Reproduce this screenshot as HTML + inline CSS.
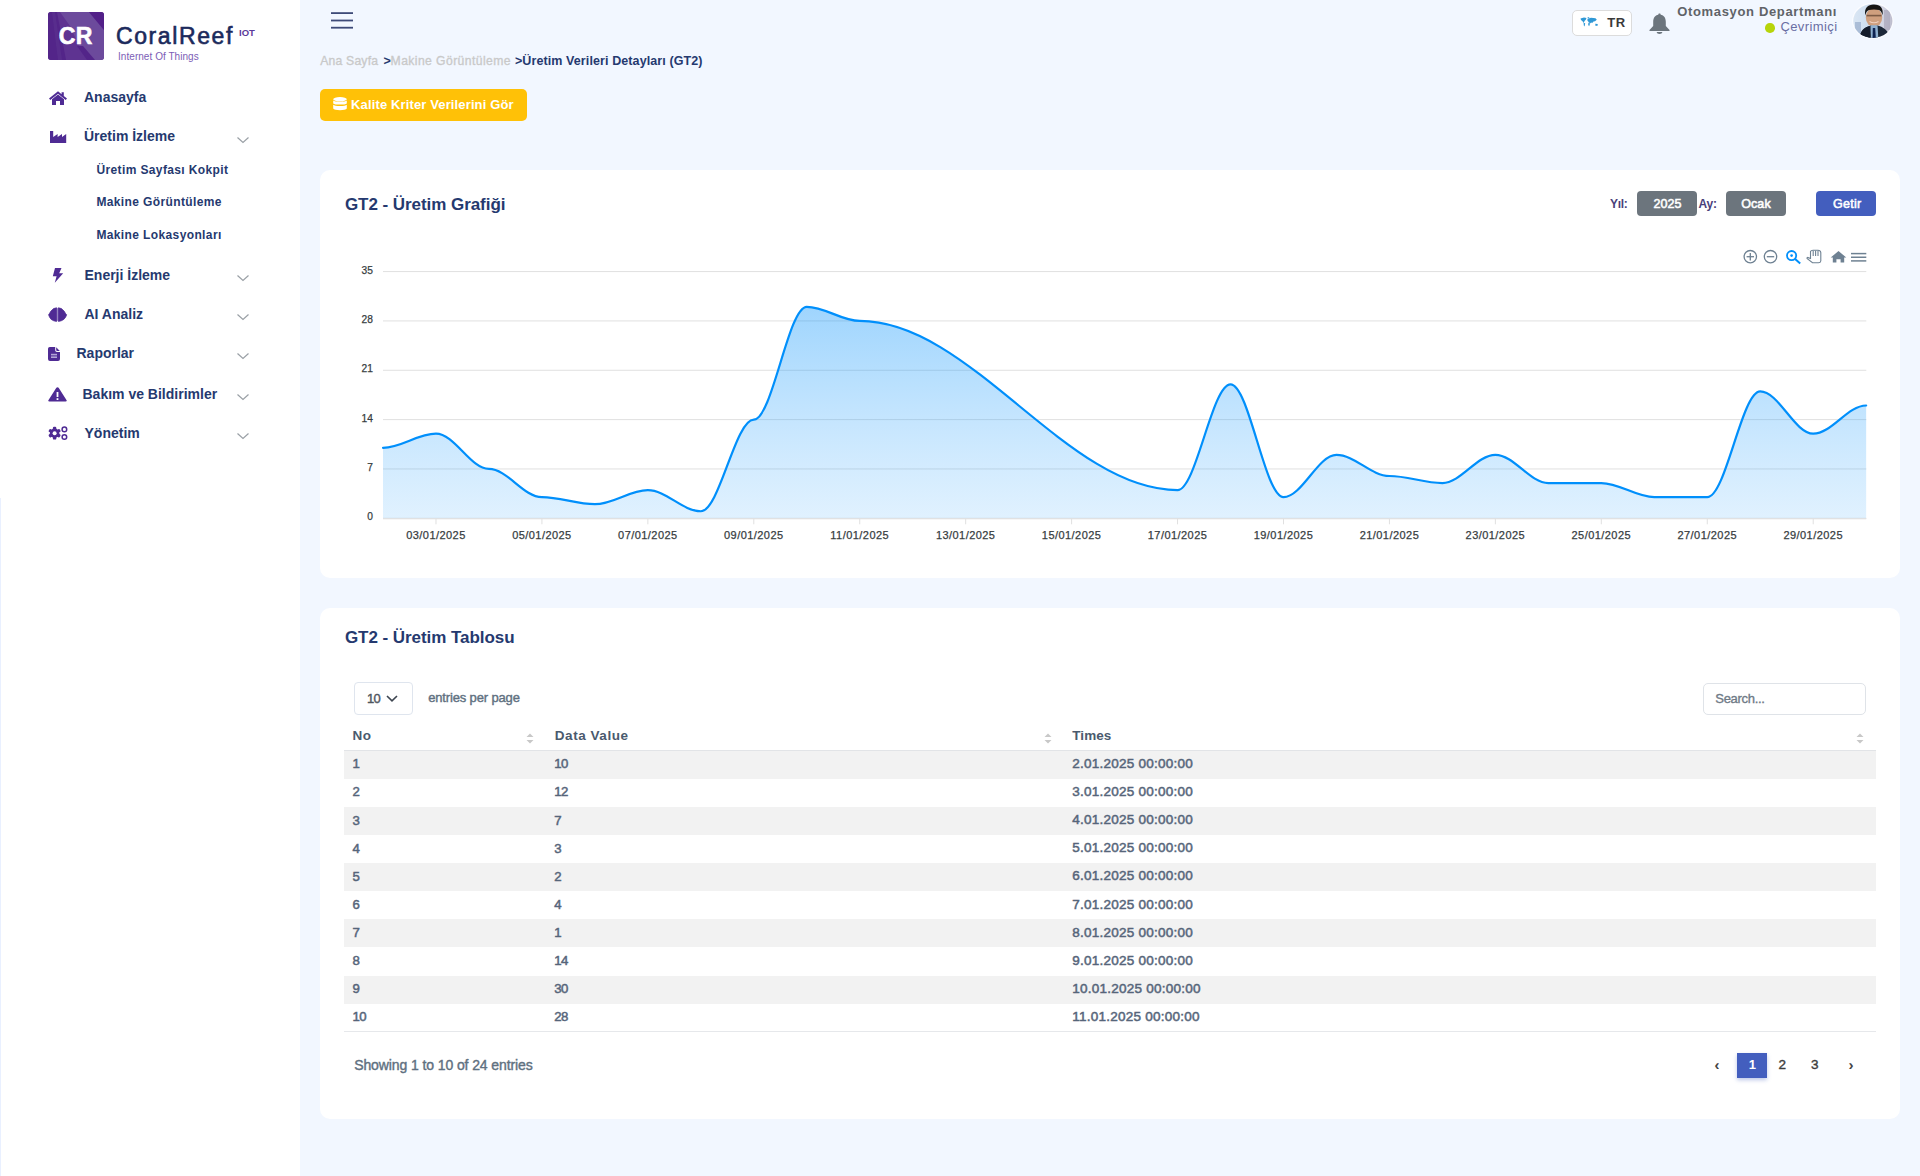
<!DOCTYPE html>
<html><head><meta charset="utf-8"><title>GT2 - Üretim Verileri</title>
<style>
html,body{margin:0;padding:0}
body{width:1920px;height:1176px;position:relative;overflow:hidden;background:#f2f7ff;font-family:"Liberation Sans",sans-serif}
.t{position:absolute;white-space:nowrap;line-height:1}
.r{position:absolute;display:block}
</style></head><body>
<div class="r" style="left:0px;top:0px;width:300px;height:1176px;background:#fff"></div>
<div class="r" style="left:0px;top:498px;width:1px;height:678px;background:#e9f0ff"></div>
<svg class="r" style="left:48px;top:12px" width="56" height="48" viewBox="0 0 56 48">
<defs><clipPath id="lc"><rect width="56" height="48" rx="3"/></clipPath></defs>
<g clip-path="url(#lc)">
<rect width="56" height="48" fill="#5e3391"/>
<polygon points="0,0 9,0 18,48 0,48" fill="#532589"/>
<polygon points="4,0 7,0 14,48 10,48" fill="#5a2f8f" opacity="0.8"/>
<polygon points="12,0 41,0 56,18 56,48 44,48 31,34 22,14" fill="#6c4a9c"/>
<polygon points="41,0 56,0 56,18" fill="#521f88"/>
<polygon points="29,34 35,34 47,48 39,48" fill="#532589"/>
</g></svg>
<div class="t " style="left:58.80px;top:25.23px;font-size:23px;font-weight:700;color:#ffffff;letter-spacing:0.3px;-webkit-text-stroke:0.6px #fff;">CR</div>
<div class="t " style="left:116.00px;top:25.03px;font-size:23px;font-weight:400;color:#1b2a5c;letter-spacing:1.6px;-webkit-text-stroke:0.6px currentColor;">CoralReef</div>
<div class="t " style="left:239.00px;top:27.66px;font-size:9.5px;font-weight:700;color:#5b3a9a;">IOT</div>
<div class="t " style="left:118.00px;top:51.53px;font-size:10px;font-weight:400;color:#7c5db6;letter-spacing:0.05px;">Internet Of Things</div>
<div class="t " style="left:84.00px;top:90.45px;font-size:14px;font-weight:700;color:#25396f;">Anasayfa</div>
<div class="t " style="left:84.00px;top:129.45px;font-size:14px;font-weight:700;color:#25396f;">Üretim İzleme</div>
<svg class="r" style="left:236px;top:135.6px" width="14" height="8" viewBox="0 0 14 8"><polyline points="1.5,1.5 7,6.5 12.5,1.5" fill="none" stroke="#9aa0a6" stroke-width="1.2"/></svg>
<div class="t " style="left:84.50px;top:267.85px;font-size:14px;font-weight:700;color:#25396f;">Enerji İzleme</div>
<svg class="r" style="left:236px;top:274.0px" width="14" height="8" viewBox="0 0 14 8"><polyline points="1.5,1.5 7,6.5 12.5,1.5" fill="none" stroke="#9aa0a6" stroke-width="1.2"/></svg>
<div class="t " style="left:84.50px;top:307.15px;font-size:14px;font-weight:700;color:#25396f;">AI Analiz</div>
<svg class="r" style="left:236px;top:313.3px" width="14" height="8" viewBox="0 0 14 8"><polyline points="1.5,1.5 7,6.5 12.5,1.5" fill="none" stroke="#9aa0a6" stroke-width="1.2"/></svg>
<div class="t " style="left:76.50px;top:346.25px;font-size:14px;font-weight:700;color:#25396f;">Raporlar</div>
<svg class="r" style="left:236px;top:352.4px" width="14" height="8" viewBox="0 0 14 8"><polyline points="1.5,1.5 7,6.5 12.5,1.5" fill="none" stroke="#9aa0a6" stroke-width="1.2"/></svg>
<div class="t " style="left:82.50px;top:386.55px;font-size:14px;font-weight:700;color:#25396f;">Bakım ve Bildirimler</div>
<svg class="r" style="left:236px;top:392.7px" width="14" height="8" viewBox="0 0 14 8"><polyline points="1.5,1.5 7,6.5 12.5,1.5" fill="none" stroke="#9aa0a6" stroke-width="1.2"/></svg>
<div class="t " style="left:84.50px;top:425.55px;font-size:14px;font-weight:700;color:#25396f;">Yönetim</div>
<svg class="r" style="left:236px;top:431.7px" width="14" height="8" viewBox="0 0 14 8"><polyline points="1.5,1.5 7,6.5 12.5,1.5" fill="none" stroke="#9aa0a6" stroke-width="1.2"/></svg>
<svg class="r" style="left:48px;top:90px" width="20" height="16" viewBox="0 0 20 16">
<path d="M10 1.2 L1 8.6 L2.3 10 L10 3.8 L17.7 10 L19 8.6 L15.8 6 V2.2 H13.6 V4.2 Z" fill="#4f2b94"/>
<path d="M4 9.2 L10 4.6 L16 9.2 V15 H12 V11 H8 V15 H4 Z" fill="#4f2b94"/>
</svg>
<svg class="r" style="left:50px;top:131px" width="17" height="12" viewBox="0 0 17 12">
<path d="M0 0 H3.2 V6 L7.6 3 V6 L12 3 V6 L16.2 3 V12 H0 Z" fill="#4f2b94"/>
</svg>
<svg class="r" style="left:52px;top:268px" width="12" height="15" viewBox="0 0 12 15">
<path d="M3 0 H9.5 L7.2 5.2 H11.2 L2.8 14.8 L4.6 8.2 H0.8 Z" fill="#4f2b94"/>
</svg>
<svg class="r" style="left:48px;top:307px" width="20" height="15" viewBox="0 0 20 15">
<rect x="8.4" y="1.2" width="2.2" height="12.6" fill="#a597cc"/>
<path d="M8.6 0.8 L5.6 1.6 L3 4 L1.4 6.6 L0.6 7.8 L1.6 10.2 L3.2 12.4 L5.8 13.8 L8.6 14.4 Z" fill="#4f2b94" stroke="#4f2b94" stroke-width="0.8" stroke-linejoin="round"/>
<path d="M10.4 0.8 L13.4 1.6 L16 4 L17.6 6.6 L18.6 7.8 L17.6 10.2 L15.8 12.4 L13.2 13.8 L10.4 14.4 Z" fill="#4f2b94" stroke="#4f2b94" stroke-width="0.8" stroke-linejoin="round"/>
</svg>
<svg class="r" style="left:48px;top:347px" width="13" height="14" viewBox="0 0 13 14">
<path d="M1.8 0 H7.2 V3.2 Q7.2 5 9 5 H12 V12 Q12 14 10 14 H2 Q0 14 0 12 V1.8 Q0 0 1.8 0 Z" fill="#4f2b94"/>
<path d="M8.2 0.2 L11.8 3.9 H9.2 Q8.2 3.9 8.2 2.9 Z" fill="#4f2b94"/>
<rect x="3" y="6.8" width="6" height="1.6" fill="#b3a5d6"/>
<rect x="3" y="9.4" width="6" height="1.6" fill="#b3a5d6"/>
</svg>
<svg class="r" style="left:47.5px;top:386.5px" width="19" height="15" viewBox="0 0 19 15">
<path d="M9.5 0.3 Q10.3 0.3 10.8 1.1 L18.6 13.2 Q19.2 14.6 17.6 14.6 H1.4 Q-0.2 14.6 0.4 13.2 L8.2 1.1 Q8.7 0.3 9.5 0.3 Z" fill="#4f2b94"/>
<rect x="8.6" y="5" width="1.8" height="5" fill="#fff"/>
<rect x="8.6" y="11.2" width="1.8" height="1.8" fill="#fff"/>
</svg>
<svg class="r" style="left:47px;top:425px" width="22" height="16" viewBox="0 0 22 16">
<g fill="#4f2b94">
<circle cx="7.6" cy="8.2" r="4.7"/>
<rect x="5.9" y="1.8" width="3.4" height="12.8" rx="1.2"/>
<rect x="5.9" y="1.8" width="3.4" height="12.8" rx="1.2" transform="rotate(60 7.6 8.2)"/>
<rect x="5.9" y="1.8" width="3.4" height="12.8" rx="1.2" transform="rotate(120 7.6 8.2)"/>
</g>
<circle cx="7.6" cy="8.2" r="2" fill="#fff"/>
<circle cx="17.4" cy="4.4" r="2.3" fill="none" stroke="#4f2b94" stroke-width="1.5"/>
<circle cx="17.4" cy="12" r="2.3" fill="none" stroke="#4f2b94" stroke-width="1.5"/>
</svg>
<div class="t " style="left:96.40px;top:163.64px;font-size:12px;font-weight:700;color:#25396f;letter-spacing:0.38px;">Üretim Sayfası Kokpit</div>
<div class="t " style="left:96.40px;top:196.04px;font-size:12px;font-weight:700;color:#25396f;letter-spacing:0.38px;">Makine Görüntüleme</div>
<div class="t " style="left:96.40px;top:228.54px;font-size:12px;font-weight:700;color:#25396f;letter-spacing:0.38px;">Makine Lokasyonları</div>
<svg class="r" style="left:331px;top:12px" width="22" height="17" viewBox="0 0 22 17">
<rect x="0" y="0.2" width="22" height="1.8" fill="#3d4a78"/>
<rect x="0" y="7.6" width="22" height="1.8" fill="#3d4a78"/>
<rect x="0" y="14.8" width="22" height="1.8" fill="#3d4a78"/>
</svg>
<div class="r" style="left:1572px;top:10px;width:60px;height:25.5px;background:#fff;border:1px solid #dcdcdc;border-radius:5px;box-sizing:border-box"></div>
<svg class="r" style="left:1580px;top:17px" width="19" height="10" viewBox="0 0 19 10">
<g fill="#2f98d6">
<path d="M0.5 1.5 L4 0.5 L6.5 1 L5.8 2.8 L4.5 4 L3.8 6 L2.5 4.2 L1 3 Z"/>
<path d="M7.2 0.6 L9.5 0 L8.6 1.6 Z"/>
<path d="M3.6 5.8 L5.2 6.2 L4.6 9.5 L3.8 8.5 Z"/>
<path d="M7.5 1.8 L11 0.8 L15.5 1.2 L16.8 2.8 L15 4.2 L13.5 4.4 L12.2 6 L11.2 5.4 L10 6.4 L8.4 4.8 L7.4 3.4 Z"/>
<path d="M8.4 5.6 L10 6.6 L9.2 9.2 L8.2 8 Z"/>
<path d="M15.2 6.8 L17.6 7 L17.8 8.6 L15.6 9 Z"/>
</g></svg>
<div class="t " style="left:1607.20px;top:16.19px;font-size:13px;font-weight:700;color:#3a3a3a;letter-spacing:0.5px;">TR</div>
<svg class="r" style="left:1649px;top:12.5px" width="21" height="21" viewBox="0 0 21 21">
<path d="M10.5 0.5 C11.3 0.5 11.7 1 11.7 1.7 C15 2.3 16.8 5 16.8 8.8 V13 L20.5 17 V18 H0.5 V17 L4.2 13 V8.8 C4.2 5 6 2.3 9.3 1.7 C9.3 1 9.7 0.5 10.5 0.5 Z" fill="#6c757d"/>
<path d="M7.6 19 H13.4 C13.2 20.3 12 21 10.5 21 C9 21 7.8 20.3 7.6 19 Z" fill="#6c757d"/>
</svg>
<div class="t " style="right:83.00px;top:4.59px;font-size:13px;font-weight:700;color:#5f6368;letter-spacing:0.66px;">Otomasyon Departmanı</div>
<div class="t " style="right:82.50px;top:19.59px;font-size:13px;font-weight:400;color:#6a6ea3;letter-spacing:0.4px;">Çevrimiçi</div>
<div class="r" style="left:1765.2px;top:23px;width:9.6px;height:9.6px;border-radius:50%;background:#b7d40a"></div>
<svg class="r" style="left:1851px;top:1.5px" width="44" height="39" viewBox="0 0 44 39">
<defs><clipPath id="av"><ellipse cx="21.8" cy="18.9" rx="19.6" ry="17"/></clipPath>
<linearGradient id="avbg" x1="0" y1="0" x2="1" y2="0"><stop offset="0" stop-color="#dce7f4"/><stop offset="0.35" stop-color="#cfdff0"/><stop offset="0.7" stop-color="#d3d6e4"/><stop offset="1" stop-color="#b7b5c6"/></linearGradient></defs>
<ellipse cx="21.8" cy="18.9" rx="20.8" ry="18.2" fill="#fbfcff"/>
<g clip-path="url(#av)">
<rect width="44" height="39" fill="url(#avbg)"/>
<rect x="4" y="20" width="6" height="14" fill="#8ea3c4" opacity="0.6"/>
<rect x="33" y="8" width="6" height="20" fill="#a9a6ba" opacity="0.7"/>
<ellipse cx="23" cy="15.5" rx="8.2" ry="9.6" fill="#cf9f7e"/>
<path d="M14.2 13.5 C13.2 6 16.5 2.5 23 2.5 C29.5 2.5 32.5 6 31.6 13.2 C30.6 10.5 30 8.5 28 8 C25 7.3 21 7.3 18 8 C16 8.6 15 10.5 14.2 13.5 Z" fill="#161514"/>
<rect x="15.5" y="12.8" width="15" height="1.6" fill="#5a3e2e" opacity="0.7"/>
<path d="M18.5 19.5 Q23 22 27.5 19.5" stroke="#f0d0c0" stroke-width="1.2" fill="none"/>
<path d="M8 39 C9 29 13 25.5 20 23.5 L23 25 L26 23.5 C33 25 38 28.5 40 39 Z" fill="#1c2839"/>
<path d="M19.5 23.2 L26.5 23.2 L27.5 39 H20 Z" fill="#8fb0d0"/>
<path d="M21.8 26 L24.2 26 L25 39 H21.5 Z" fill="#0f2352"/>
<path d="M8 39 C9 29 12 26 18.5 24 L19.5 39 Z" fill="#141c2b"/>
</g>
</svg>
<div class="t " style="left:320.20px;top:55.07px;font-size:12.2px;font-weight:400;color:#c9c9c9;letter-spacing:0.2px;-webkit-text-stroke:0.3px currentColor;">Ana Sayfa</div>
<div class="t " style="left:383.50px;top:54.82px;font-size:12.5px;font-weight:700;color:#25396f;">&gt;</div>
<div class="t " style="left:390.60px;top:55.07px;font-size:12.2px;font-weight:400;color:#c9c9c9;letter-spacing:0.4px;-webkit-text-stroke:0.3px currentColor;">Makine Görüntüleme</div>
<div class="t " style="left:515.00px;top:54.82px;font-size:12.5px;font-weight:700;color:#25396f;">&gt;</div>
<div class="t " style="left:522.30px;top:54.62px;font-size:12.5px;font-weight:700;color:#25396f;letter-spacing:0.1px;">Üretim Verileri Detayları (GT2)</div>
<div class="r" style="left:320px;top:89px;width:207px;height:32px;background:#ffc107;border-radius:5px"></div>
<svg class="r" style="left:333px;top:97px" width="14" height="14" viewBox="0 0 14 14">
<g fill="#fff">
<ellipse cx="7" cy="2.2" rx="6.8" ry="2.2"/>
<path d="M0.2 3.6 C1.5 5.2 12.5 5.2 13.8 3.6 V6.4 C12.5 8 1.5 8 0.2 6.4 Z"/>
<path d="M0.2 7.8 C1.5 9.4 12.5 9.4 13.8 7.8 V11.6 C13 13.8 1 13.8 0.2 11.6 Z"/>
</g></svg>
<div class="t " style="left:351.10px;top:98.09px;font-size:13px;font-weight:700;color:#ffffff;letter-spacing:0.13px;">Kalite Kriter Verilerini Gör</div>
<div class="r" style="left:320px;top:170px;width:1580px;height:408px;background:#fff;border-radius:10px"></div>
<div class="t " style="left:344.90px;top:195.51px;font-size:17px;font-weight:700;color:#25396f;letter-spacing:-0.05px;">GT2 - Üretim Grafiği</div>
<div class="t " style="left:1610.00px;top:197.84px;font-size:12px;font-weight:700;color:#4a3f7a;letter-spacing:-0.3px;">Yıl:</div>
<div class="r" style="left:1637px;top:191px;width:60px;height:25px;background:#6c757d;border-radius:4px"></div>
<div class="t " style="left:1653.60px;top:197.62px;font-size:12.5px;font-weight:400;color:#ffffff;letter-spacing:0.05px;-webkit-text-stroke:0.55px #fff;">2025</div>
<div class="t " style="left:1698.50px;top:197.84px;font-size:12px;font-weight:700;color:#4a3f7a;letter-spacing:-0.2px;">Ay:</div>
<div class="r" style="left:1726px;top:191px;width:60px;height:25px;background:#6c757d;border-radius:4px"></div>
<div class="t " style="left:1741.20px;top:197.62px;font-size:12.5px;font-weight:400;color:#ffffff;letter-spacing:0.1px;-webkit-text-stroke:0.55px #fff;">Ocak</div>
<div class="r" style="left:1816px;top:191px;width:60px;height:25px;background:#435ebe;border-radius:4px"></div>
<div class="t " style="left:1833.00px;top:197.62px;font-size:12.5px;font-weight:400;color:#ffffff;letter-spacing:0.3px;-webkit-text-stroke:0.55px #fff;">Getir</div>
<svg class="r" style="left:0;top:0" width="1920" height="600" viewBox="0 0 1920 600">
<defs><linearGradient id="ag" gradientUnits="userSpaceOnUse" x1="0" y1="305" x2="0" y2="518"><stop offset="0" stop-color="#008ffb" stop-opacity="0.38"/><stop offset="1" stop-color="#3ea9fc" stop-opacity="0.16"/></linearGradient></defs>
<line x1="383" y1="518.30" x2="1866.3" y2="518.30" stroke="#e0e0e0" stroke-width="1"/>
<line x1="383" y1="468.96" x2="1866.3" y2="468.96" stroke="#e0e0e0" stroke-width="1"/>
<line x1="383" y1="419.61" x2="1866.3" y2="419.61" stroke="#e0e0e0" stroke-width="1"/>
<line x1="383" y1="370.27" x2="1866.3" y2="370.27" stroke="#e0e0e0" stroke-width="1"/>
<line x1="383" y1="320.93" x2="1866.3" y2="320.93" stroke="#e0e0e0" stroke-width="1"/>
<line x1="383" y1="271.58" x2="1866.3" y2="271.58" stroke="#e0e0e0" stroke-width="1"/>
<path d="M383.00,447.81 C401.54,447.81 417.43,433.71 435.97,433.71 C454.51,433.71 470.40,468.96 488.94,468.96 C507.48,468.96 523.37,497.15 541.91,497.15 C560.45,497.15 576.34,504.20 594.88,504.20 C613.42,504.20 629.31,490.10 647.85,490.10 C666.39,490.10 682.28,511.25 700.82,511.25 C719.36,511.25 735.25,419.61 753.79,419.61 C772.33,419.61 788.22,306.83 806.76,306.83 C825.30,306.83 841.19,320.93 859.73,320.93 C970.97,320.93 1066.31,490.10 1177.55,490.10 C1196.09,490.10 1211.98,384.37 1230.52,384.37 C1249.06,384.37 1264.95,497.15 1283.49,497.15 C1302.03,497.15 1317.92,454.86 1336.46,454.86 C1355.00,454.86 1370.89,476.01 1389.43,476.01 C1407.97,476.01 1423.86,483.05 1442.40,483.05 C1460.94,483.05 1476.83,454.86 1495.37,454.86 C1513.91,454.86 1529.80,483.05 1548.34,483.05 C1566.88,483.05 1582.77,483.05 1601.31,483.05 C1619.85,483.05 1635.74,497.15 1654.28,497.15 C1672.82,497.15 1688.71,497.15 1707.25,497.15 C1725.79,497.15 1741.68,391.42 1760.22,391.42 C1778.76,391.42 1794.65,433.71 1813.19,433.71 C1831.73,433.71 1847.62,405.52 1866.16,405.52 L1866.16,518.30 L383.00,518.30 Z" fill="url(#ag)"/>
<path d="M383.00,447.81 C401.54,447.81 417.43,433.71 435.97,433.71 C454.51,433.71 470.40,468.96 488.94,468.96 C507.48,468.96 523.37,497.15 541.91,497.15 C560.45,497.15 576.34,504.20 594.88,504.20 C613.42,504.20 629.31,490.10 647.85,490.10 C666.39,490.10 682.28,511.25 700.82,511.25 C719.36,511.25 735.25,419.61 753.79,419.61 C772.33,419.61 788.22,306.83 806.76,306.83 C825.30,306.83 841.19,320.93 859.73,320.93 C970.97,320.93 1066.31,490.10 1177.55,490.10 C1196.09,490.10 1211.98,384.37 1230.52,384.37 C1249.06,384.37 1264.95,497.15 1283.49,497.15 C1302.03,497.15 1317.92,454.86 1336.46,454.86 C1355.00,454.86 1370.89,476.01 1389.43,476.01 C1407.97,476.01 1423.86,483.05 1442.40,483.05 C1460.94,483.05 1476.83,454.86 1495.37,454.86 C1513.91,454.86 1529.80,483.05 1548.34,483.05 C1566.88,483.05 1582.77,483.05 1601.31,483.05 C1619.85,483.05 1635.74,497.15 1654.28,497.15 C1672.82,497.15 1688.71,497.15 1707.25,497.15 C1725.79,497.15 1741.68,391.42 1760.22,391.42 C1778.76,391.42 1794.65,433.71 1813.19,433.71 C1831.73,433.71 1847.62,405.52 1866.16,405.52" fill="none" stroke="#008ffb" stroke-width="2.2" stroke-linecap="round"/>
<line x1="383" y1="518.80" x2="1866.3" y2="518.80" stroke="#e0e0e0" stroke-width="1"/>
<line x1="435.97" y1="518.30" x2="435.97" y2="524.30" stroke="#e0e0e0" stroke-width="1"/>
<line x1="541.91" y1="518.30" x2="541.91" y2="524.30" stroke="#e0e0e0" stroke-width="1"/>
<line x1="647.85" y1="518.30" x2="647.85" y2="524.30" stroke="#e0e0e0" stroke-width="1"/>
<line x1="753.79" y1="518.30" x2="753.79" y2="524.30" stroke="#e0e0e0" stroke-width="1"/>
<line x1="859.73" y1="518.30" x2="859.73" y2="524.30" stroke="#e0e0e0" stroke-width="1"/>
<line x1="965.67" y1="518.30" x2="965.67" y2="524.30" stroke="#e0e0e0" stroke-width="1"/>
<line x1="1071.61" y1="518.30" x2="1071.61" y2="524.30" stroke="#e0e0e0" stroke-width="1"/>
<line x1="1177.55" y1="518.30" x2="1177.55" y2="524.30" stroke="#e0e0e0" stroke-width="1"/>
<line x1="1283.49" y1="518.30" x2="1283.49" y2="524.30" stroke="#e0e0e0" stroke-width="1"/>
<line x1="1389.43" y1="518.30" x2="1389.43" y2="524.30" stroke="#e0e0e0" stroke-width="1"/>
<line x1="1495.37" y1="518.30" x2="1495.37" y2="524.30" stroke="#e0e0e0" stroke-width="1"/>
<line x1="1601.31" y1="518.30" x2="1601.31" y2="524.30" stroke="#e0e0e0" stroke-width="1"/>
<line x1="1707.25" y1="518.30" x2="1707.25" y2="524.30" stroke="#e0e0e0" stroke-width="1"/>
<line x1="1813.19" y1="518.30" x2="1813.19" y2="524.30" stroke="#e0e0e0" stroke-width="1"/>
</svg>
<div class="t " style="right:1547.00px;top:512.46px;font-size:10.2px;font-weight:400;color:#373d3f;letter-spacing:0.1px;-webkit-text-stroke:0.25px currentColor;">0</div>
<div class="t " style="right:1547.00px;top:463.12px;font-size:10.2px;font-weight:400;color:#373d3f;letter-spacing:0.1px;-webkit-text-stroke:0.25px currentColor;">7</div>
<div class="t " style="right:1547.00px;top:413.78px;font-size:10.2px;font-weight:400;color:#373d3f;letter-spacing:0.1px;-webkit-text-stroke:0.25px currentColor;">14</div>
<div class="t " style="right:1547.00px;top:364.43px;font-size:10.2px;font-weight:400;color:#373d3f;letter-spacing:0.1px;-webkit-text-stroke:0.25px currentColor;">21</div>
<div class="t " style="right:1547.00px;top:315.09px;font-size:10.2px;font-weight:400;color:#373d3f;letter-spacing:0.1px;-webkit-text-stroke:0.25px currentColor;">28</div>
<div class="t " style="right:1547.00px;top:265.75px;font-size:10.2px;font-weight:400;color:#373d3f;letter-spacing:0.1px;-webkit-text-stroke:0.25px currentColor;">35</div>
<div class="t" style="left:395.97px;width:80px;text-align:center;top:530.29px;font-size:11px;color:#373d3f;letter-spacing:0.45px;-webkit-text-stroke:0.25px #373d3f">03/01/2025</div>
<div class="t" style="left:501.91px;width:80px;text-align:center;top:530.29px;font-size:11px;color:#373d3f;letter-spacing:0.45px;-webkit-text-stroke:0.25px #373d3f">05/01/2025</div>
<div class="t" style="left:607.85px;width:80px;text-align:center;top:530.29px;font-size:11px;color:#373d3f;letter-spacing:0.45px;-webkit-text-stroke:0.25px #373d3f">07/01/2025</div>
<div class="t" style="left:713.79px;width:80px;text-align:center;top:530.29px;font-size:11px;color:#373d3f;letter-spacing:0.45px;-webkit-text-stroke:0.25px #373d3f">09/01/2025</div>
<div class="t" style="left:819.73px;width:80px;text-align:center;top:530.29px;font-size:11px;color:#373d3f;letter-spacing:0.45px;-webkit-text-stroke:0.25px #373d3f">11/01/2025</div>
<div class="t" style="left:925.67px;width:80px;text-align:center;top:530.29px;font-size:11px;color:#373d3f;letter-spacing:0.45px;-webkit-text-stroke:0.25px #373d3f">13/01/2025</div>
<div class="t" style="left:1031.61px;width:80px;text-align:center;top:530.29px;font-size:11px;color:#373d3f;letter-spacing:0.45px;-webkit-text-stroke:0.25px #373d3f">15/01/2025</div>
<div class="t" style="left:1137.55px;width:80px;text-align:center;top:530.29px;font-size:11px;color:#373d3f;letter-spacing:0.45px;-webkit-text-stroke:0.25px #373d3f">17/01/2025</div>
<div class="t" style="left:1243.49px;width:80px;text-align:center;top:530.29px;font-size:11px;color:#373d3f;letter-spacing:0.45px;-webkit-text-stroke:0.25px #373d3f">19/01/2025</div>
<div class="t" style="left:1349.43px;width:80px;text-align:center;top:530.29px;font-size:11px;color:#373d3f;letter-spacing:0.45px;-webkit-text-stroke:0.25px #373d3f">21/01/2025</div>
<div class="t" style="left:1455.37px;width:80px;text-align:center;top:530.29px;font-size:11px;color:#373d3f;letter-spacing:0.45px;-webkit-text-stroke:0.25px #373d3f">23/01/2025</div>
<div class="t" style="left:1561.31px;width:80px;text-align:center;top:530.29px;font-size:11px;color:#373d3f;letter-spacing:0.45px;-webkit-text-stroke:0.25px #373d3f">25/01/2025</div>
<div class="t" style="left:1667.25px;width:80px;text-align:center;top:530.29px;font-size:11px;color:#373d3f;letter-spacing:0.45px;-webkit-text-stroke:0.25px #373d3f">27/01/2025</div>
<div class="t" style="left:1773.19px;width:80px;text-align:center;top:530.29px;font-size:11px;color:#373d3f;letter-spacing:0.45px;-webkit-text-stroke:0.25px #373d3f">29/01/2025</div>
<svg class="r" style="left:1740px;top:248px" width="130" height="18" viewBox="1740 248 130 18">
<g fill="none" stroke="#6e8192" stroke-width="1.3">
<circle cx="1750.3" cy="256.7" r="6.2"/>
<line x1="1750.3" y1="253" x2="1750.3" y2="260.4"/><line x1="1746.6" y1="256.7" x2="1754" y2="256.7"/>
<circle cx="1770.5" cy="256.7" r="6.2"/>
<line x1="1766.8" y1="256.7" x2="1774.2" y2="256.7"/>
</g>
<g fill="none" stroke="#008ffb" stroke-width="1.8">
<circle cx="1791.6" cy="255.6" r="4.6"/>
<line x1="1794.8" y1="258.8" x2="1800.2" y2="263.6" stroke-width="2"/>
</g>
<circle cx="1791.6" cy="255.6" r="1.3" fill="#008ffb"/>
<g fill="none" stroke="#6e8192" stroke-width="1.1">
<path d="M1810.5 251.5 Q1811 250.2 1813 250.2 H1818 Q1820.5 250.2 1820.8 252.5 V261 Q1820.5 262.8 1818.5 262.8 H1812.5 L1807.2 258.6 Q1806.6 257.8 1807.6 257.4 L1810.5 258.4 Z"/>
<line x1="1813.2" y1="250.8" x2="1813.2" y2="256"/><line x1="1815.6" y1="250.8" x2="1815.6" y2="256"/><line x1="1818" y1="250.8" x2="1818" y2="256"/>
</g>
<path d="M1838.5 251 L1846.3 257.6 H1844.2 V262.5 H1840.6 V259.2 H1836.4 V262.5 H1832.8 V257.6 H1830.7 Z" fill="#6e8192"/>
<g stroke="#6e8192" stroke-width="1.5">
<line x1="1851" y1="253.6" x2="1866.3" y2="253.6"/><line x1="1851" y1="257.25" x2="1866.3" y2="257.25"/><line x1="1851" y1="260.9" x2="1866.3" y2="260.9"/>
</g>
</svg>
<div class="r" style="left:320px;top:608px;width:1580px;height:511px;background:#fff;border-radius:10px"></div>
<div class="t " style="left:344.90px;top:628.51px;font-size:17px;font-weight:700;color:#25396f;letter-spacing:-0.05px;">GT2 - Üretim Tablosu</div>
<div class="r" style="left:354px;top:682px;width:58.5px;height:32.5px;border:1px solid #dfe5ee;border-radius:4px;box-sizing:border-box"></div>
<div class="t " style="left:366.90px;top:691.99px;font-size:13px;font-weight:400;color:#4f5660;letter-spacing:-0.6px;-webkit-text-stroke:0.4px currentColor;">10</div>
<svg class="r" style="left:386px;top:695px" width="12" height="7" viewBox="0 0 12 7"><polyline points="1,1 6,5.8 11,1" fill="none" stroke="#3d4550" stroke-width="1.6"/></svg>
<div class="t " style="left:428.20px;top:690.99px;font-size:13px;font-weight:400;color:#607080;letter-spacing:-0.15px;-webkit-text-stroke:0.4px currentColor;">entries per page</div>
<div class="r" style="left:1702.5px;top:682.5px;width:163.5px;height:32.5px;border:1px solid #dfe3e8;border-radius:5px;box-sizing:border-box"></div>
<div class="t " style="left:1715.30px;top:691.79px;font-size:13px;font-weight:400;color:#6f7a86;letter-spacing:-0.3px;-webkit-text-stroke:0.35px currentColor;">Search...</div>
<div class="t " style="left:352.60px;top:728.67px;font-size:13.5px;font-weight:700;color:#4a5a6e;letter-spacing:0.4px;">No</div>
<div class="t " style="left:554.80px;top:728.57px;font-size:13.5px;font-weight:700;color:#4a5a6e;letter-spacing:0.55px;">Data Value</div>
<div class="t " style="left:1072.20px;top:728.77px;font-size:13.5px;font-weight:700;color:#4a5a6e;letter-spacing:0.1px;">Times</div>
<svg class="r" style="left:526px;top:732.5px" width="8" height="11" viewBox="0 0 8 11"><path d="M4 0.5 L7.5 4 H0.5 Z" fill="#c8c8c8"/><path d="M4 10.5 L7.5 7 H0.5 Z" fill="#c8c8c8"/></svg>
<svg class="r" style="left:1044px;top:732.5px" width="8" height="11" viewBox="0 0 8 11"><path d="M4 0.5 L7.5 4 H0.5 Z" fill="#c8c8c8"/><path d="M4 10.5 L7.5 7 H0.5 Z" fill="#c8c8c8"/></svg>
<svg class="r" style="left:1856px;top:732.5px" width="8" height="11" viewBox="0 0 8 11"><path d="M4 0.5 L7.5 4 H0.5 Z" fill="#c8c8c8"/><path d="M4 10.5 L7.5 7 H0.5 Z" fill="#c8c8c8"/></svg>
<div class="r" style="left:344px;top:749.5px;width:1532px;height:1.5px;background:#e2e4e7"></div>
<div class="r" style="left:344px;top:750.80px;width:1532px;height:28.10px;background:#f2f2f2"></div>
<div class="t " style="left:352.40px;top:757.32px;font-size:13.2px;font-weight:400;color:#56657a;letter-spacing:-0.4px;-webkit-text-stroke:0.5px currentColor;">1</div>
<div class="t " style="left:554.20px;top:757.32px;font-size:13.2px;font-weight:400;color:#56657a;letter-spacing:-0.4px;-webkit-text-stroke:0.5px currentColor;">10</div>
<div class="t " style="left:1072.20px;top:757.07px;font-size:13.5px;font-weight:400;color:#56657a;letter-spacing:0.25px;-webkit-text-stroke:0.5px currentColor;">2.01.2025 00:00:00</div>
<div class="t " style="left:352.40px;top:785.42px;font-size:13.2px;font-weight:400;color:#56657a;letter-spacing:-0.4px;-webkit-text-stroke:0.5px currentColor;">2</div>
<div class="t " style="left:554.20px;top:785.42px;font-size:13.2px;font-weight:400;color:#56657a;letter-spacing:-0.4px;-webkit-text-stroke:0.5px currentColor;">12</div>
<div class="t " style="left:1072.20px;top:785.17px;font-size:13.5px;font-weight:400;color:#56657a;letter-spacing:0.25px;-webkit-text-stroke:0.5px currentColor;">3.01.2025 00:00:00</div>
<div class="r" style="left:344px;top:807.00px;width:1532px;height:28.10px;background:#f2f2f2"></div>
<div class="t " style="left:352.40px;top:813.52px;font-size:13.2px;font-weight:400;color:#56657a;letter-spacing:-0.4px;-webkit-text-stroke:0.5px currentColor;">3</div>
<div class="t " style="left:554.20px;top:813.52px;font-size:13.2px;font-weight:400;color:#56657a;letter-spacing:-0.4px;-webkit-text-stroke:0.5px currentColor;">7</div>
<div class="t " style="left:1072.20px;top:813.27px;font-size:13.5px;font-weight:400;color:#56657a;letter-spacing:0.25px;-webkit-text-stroke:0.5px currentColor;">4.01.2025 00:00:00</div>
<div class="t " style="left:352.40px;top:841.62px;font-size:13.2px;font-weight:400;color:#56657a;letter-spacing:-0.4px;-webkit-text-stroke:0.5px currentColor;">4</div>
<div class="t " style="left:554.20px;top:841.62px;font-size:13.2px;font-weight:400;color:#56657a;letter-spacing:-0.4px;-webkit-text-stroke:0.5px currentColor;">3</div>
<div class="t " style="left:1072.20px;top:841.37px;font-size:13.5px;font-weight:400;color:#56657a;letter-spacing:0.25px;-webkit-text-stroke:0.5px currentColor;">5.01.2025 00:00:00</div>
<div class="r" style="left:344px;top:863.20px;width:1532px;height:28.10px;background:#f2f2f2"></div>
<div class="t " style="left:352.40px;top:869.72px;font-size:13.2px;font-weight:400;color:#56657a;letter-spacing:-0.4px;-webkit-text-stroke:0.5px currentColor;">5</div>
<div class="t " style="left:554.20px;top:869.72px;font-size:13.2px;font-weight:400;color:#56657a;letter-spacing:-0.4px;-webkit-text-stroke:0.5px currentColor;">2</div>
<div class="t " style="left:1072.20px;top:869.47px;font-size:13.5px;font-weight:400;color:#56657a;letter-spacing:0.25px;-webkit-text-stroke:0.5px currentColor;">6.01.2025 00:00:00</div>
<div class="t " style="left:352.40px;top:897.82px;font-size:13.2px;font-weight:400;color:#56657a;letter-spacing:-0.4px;-webkit-text-stroke:0.5px currentColor;">6</div>
<div class="t " style="left:554.20px;top:897.82px;font-size:13.2px;font-weight:400;color:#56657a;letter-spacing:-0.4px;-webkit-text-stroke:0.5px currentColor;">4</div>
<div class="t " style="left:1072.20px;top:897.57px;font-size:13.5px;font-weight:400;color:#56657a;letter-spacing:0.25px;-webkit-text-stroke:0.5px currentColor;">7.01.2025 00:00:00</div>
<div class="r" style="left:344px;top:919.40px;width:1532px;height:28.10px;background:#f2f2f2"></div>
<div class="t " style="left:352.40px;top:925.92px;font-size:13.2px;font-weight:400;color:#56657a;letter-spacing:-0.4px;-webkit-text-stroke:0.5px currentColor;">7</div>
<div class="t " style="left:554.20px;top:925.92px;font-size:13.2px;font-weight:400;color:#56657a;letter-spacing:-0.4px;-webkit-text-stroke:0.5px currentColor;">1</div>
<div class="t " style="left:1072.20px;top:925.67px;font-size:13.5px;font-weight:400;color:#56657a;letter-spacing:0.25px;-webkit-text-stroke:0.5px currentColor;">8.01.2025 00:00:00</div>
<div class="t " style="left:352.40px;top:954.02px;font-size:13.2px;font-weight:400;color:#56657a;letter-spacing:-0.4px;-webkit-text-stroke:0.5px currentColor;">8</div>
<div class="t " style="left:554.20px;top:954.02px;font-size:13.2px;font-weight:400;color:#56657a;letter-spacing:-0.4px;-webkit-text-stroke:0.5px currentColor;">14</div>
<div class="t " style="left:1072.20px;top:953.77px;font-size:13.5px;font-weight:400;color:#56657a;letter-spacing:0.25px;-webkit-text-stroke:0.5px currentColor;">9.01.2025 00:00:00</div>
<div class="r" style="left:344px;top:975.60px;width:1532px;height:28.10px;background:#f2f2f2"></div>
<div class="t " style="left:352.40px;top:982.12px;font-size:13.2px;font-weight:400;color:#56657a;letter-spacing:-0.4px;-webkit-text-stroke:0.5px currentColor;">9</div>
<div class="t " style="left:554.20px;top:982.12px;font-size:13.2px;font-weight:400;color:#56657a;letter-spacing:-0.4px;-webkit-text-stroke:0.5px currentColor;">30</div>
<div class="t " style="left:1072.20px;top:981.87px;font-size:13.5px;font-weight:400;color:#56657a;letter-spacing:0.25px;-webkit-text-stroke:0.5px currentColor;">10.01.2025 00:00:00</div>
<div class="t " style="left:352.40px;top:1010.22px;font-size:13.2px;font-weight:400;color:#56657a;letter-spacing:-0.4px;-webkit-text-stroke:0.5px currentColor;">10</div>
<div class="t " style="left:554.20px;top:1010.22px;font-size:13.2px;font-weight:400;color:#56657a;letter-spacing:-0.4px;-webkit-text-stroke:0.5px currentColor;">28</div>
<div class="t " style="left:1072.20px;top:1009.97px;font-size:13.5px;font-weight:400;color:#56657a;letter-spacing:0.25px;-webkit-text-stroke:0.5px currentColor;">11.01.2025 00:00:00</div>
<div class="r" style="left:344px;top:1031px;width:1532px;height:1px;background:#e6e8eb"></div>
<div class="t " style="left:354.20px;top:1057.65px;font-size:14px;font-weight:400;color:#607080;letter-spacing:-0.1px;-webkit-text-stroke:0.4px currentColor;">Showing 1 to 10 of 24 entries</div>
<div class="t " style="left:1714.50px;top:1056.80px;font-size:15px;font-weight:700;color:#444;">‹</div>
<div class="r" style="left:1737px;top:1053px;width:30px;height:25px;background:#435ebe;box-shadow:0 2px 4px rgba(67,94,190,0.35)"></div>
<div class="t " style="left:1748.80px;top:1058.49px;font-size:13px;font-weight:700;color:#ffffff;">1</div>
<div class="t " style="left:1778.40px;top:1058.07px;font-size:13.5px;font-weight:400;color:#3d3d3d;-webkit-text-stroke:0.4px currentColor;">2</div>
<div class="t " style="left:1810.90px;top:1058.07px;font-size:13.5px;font-weight:400;color:#3d3d3d;-webkit-text-stroke:0.4px currentColor;">3</div>
<div class="t " style="left:1848.50px;top:1056.80px;font-size:15px;font-weight:700;color:#444;">›</div>
</body></html>
